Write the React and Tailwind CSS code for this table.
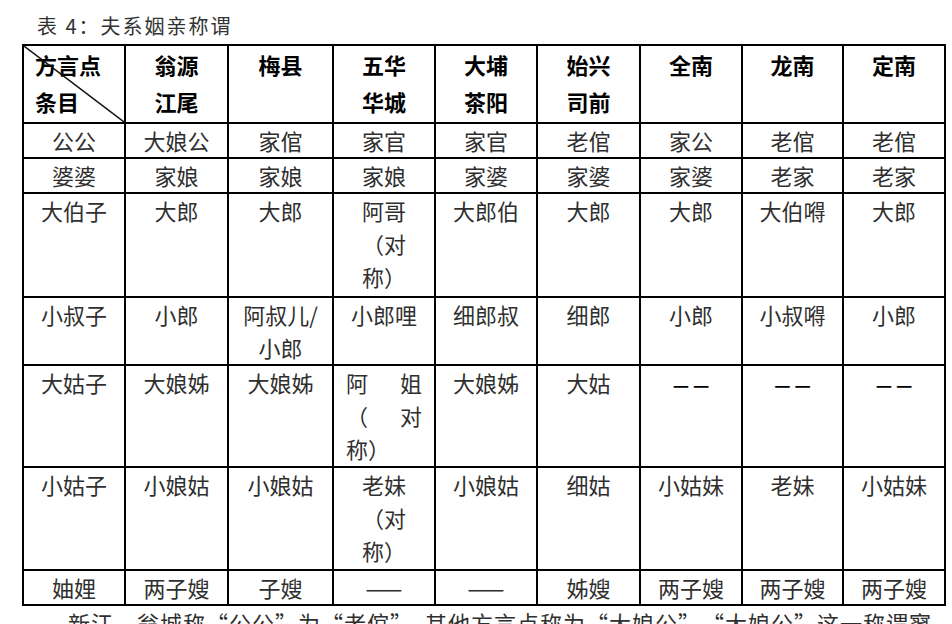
const header = [
  ["翁源", "江尾"],
  ["梅县"],
  ["五华", "华城"],
  ["大埔", "茶阳"],
  ["始兴", "司前"],
  ["全南"],
  ["龙南"],
  ["定南"],
];

const DASH = { kind: "dash" };
const SPREAD = { kind: "spread", lines: [["阿", "姐"], ["（", "对"], ["称）"]] };

const rows = [
  { h: "h-[35px]", name: "公公", cells: ["大娘公", "家倌", "家官", "家官", "老倌", "家公", "老倌", "老倌"] },
  { h: "h-[35px]", name: "婆婆", cells: ["家娘", "家娘", "家娘", "家婆", "家婆", "家婆", "老家", "老家"] },
  { h: "h-[104px]", name: "大伯子", cells: ["大郎", "大郎", ["阿哥", "（对", "称）"], "大郎伯", "大郎", "大郎", "大伯嘚", "大郎"] },
  { h: "h-[68px]", name: "小叔子", cells: ["小郎", ["阿叔儿/", "小郎"], "小郎哩", "细郎叔", "细郎", "小郎", "小叔嘚", "小郎"] },
  { h: "h-[102px]", name: "大姑子", cells: ["大娘姊", "大娘姊", SPREAD, "大娘姊", "大姑", DASH, DASH, DASH] },
  { h: "h-[103px]", name: "小姑子", cells: ["小娘姑", "小娘姑", ["老妹", "（对", "称）"], "小娘姑", "细姑", "小姑妹", "老妹", "小姑妹"] },
  { h: "h-[34px]", name: "妯娌", cells: ["两子嫂", "子嫂", "——", "——", "姊嫂", "两子嫂", "两子嫂", "两子嫂"] },
];

const widths = ["w-[102px]", "w-[103px]", "w-[105px]", "w-[102px]", "w-[102px]", "w-[103px]", "w-[102px]", "w-[101px]", "w-[102px]"];

function Cell({ value }) {
  if (typeof value === "string") return value;
  if (Array.isArray(value)) {
    return value.map((line, i) => <div key={i}>{line}</div>);
  }
  if (value.kind === "dash") {
    return (
      <span className="inline-flex gap-[4px] text-[18px] font-bold text-black">
        <span>—</span>
        <span>—</span>
      </span>
    );
  }
  // 两端对齐的那一格
  return (
    <div className="px-[12px] text-left">
      {value.lines.map((line, i) =>
        line.length === 2 ? (
          <div key={i} className="flex justify-between">
            <span>{line[0]}</span>
            <span>{line[1]}</span>
          </div>
        ) : (
          <div key={i}>{line[0]}</div>
        )
      )}
    </div>
  );
}

export default function App() {
  return (
    <div
      className="w-[952px] h-[624px] overflow-hidden bg-white text-[#2f2f2f]"
      style={{ fontFamily: '"Noto Sans CJK SC", "Noto Sans", sans-serif' }}
    >
      <div className="pl-[37px] pt-[12px] h-[44px] text-[20px] leading-[28px] tracking-[2px] text-[#333]">
        表 4：夫系姻亲称谓
      </div>

      <table className="ml-[22px] w-[924px] table-fixed border-collapse border-2 border-black text-[22px]">
        <colgroup>
          {widths.map((w, i) => (
            <col key={i} className={w} />
          ))}
        </colgroup>
        <thead>
          <tr className="h-[78px]">
            <th className="relative border-2 border-black p-0 align-top text-left font-bold text-black leading-[37px]">
              <svg className="absolute inset-0 w-full h-full" preserveAspectRatio="none" viewBox="0 0 100 100">
                <line x1="0" y1="0" x2="100" y2="100" stroke="#111" strokeWidth="1.4" vectorEffect="non-scaling-stroke" />
              </svg>
              <div className="pl-[11px]">方言点</div>
              <div className="pl-[11px]">条目</div>
            </th>
            {header.map((lines, i) => (
              <th key={i} className="border-2 border-black p-0 align-top text-center font-bold text-black leading-[37px]">
                {lines.map((l, j) => (
                  <div key={j}>{l}</div>
                ))}
              </th>
            ))}
          </tr>
        </thead>
        <tbody>
          {rows.map((row) => (
            <tr key={row.name} className={row.h}>
              <td className="border-2 border-black p-0 align-top text-center leading-[33px]">{row.name}</td>
              {row.cells.map((c, i) => (
                <td key={i} className="border-2 border-black p-0 align-top text-center leading-[33px]">
                  <Cell value={c} />
                </td>
              ))}
            </tr>
          ))}
        </tbody>
      </table>

      <p className="mt-[3px] pl-[68px] whitespace-nowrap text-[22px] leading-[26px] tracking-[1px] text-[#2f2f2f]">
        新江、翁城称“公公”为“老倌”，其他方言点称为“大娘公”，“大娘公”这一称谓寥
      </p>
    </div>
  );
}
